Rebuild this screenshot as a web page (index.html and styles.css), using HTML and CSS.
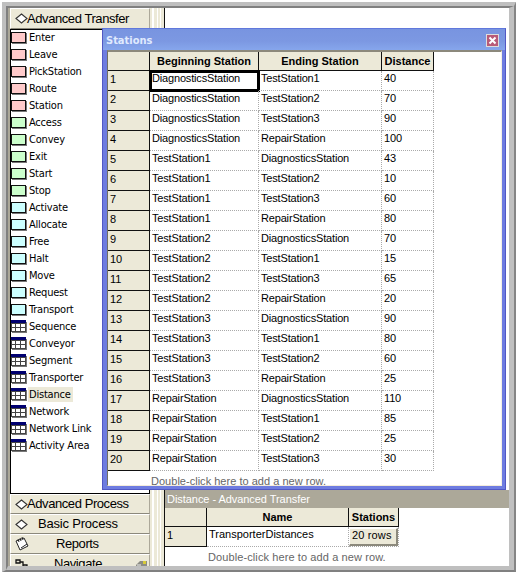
FILE: index.html
```html
<!DOCTYPE html>
<html lang="en">
<head>
<meta charset="utf-8">
<title>Stations</title>
<link rel="stylesheet" href="styles.css">
</head>
<body>
<svg width="0" height="0" class="defs">
  <defs>
    <symbol id="diamond" viewBox="0 0 13 11"><path d="M1 5.5 6.5 1 12 5.5 6.5 10Z" fill="#fff" stroke="#333" stroke-width="1.1"/></symbol>
    <symbol id="sheet" viewBox="0 0 16 13"><path d="M1 2H16V13H1Z" fill="#777"/><path d="M0 0H15V12H0Z" fill="#444"/><path d="M0 0H15V3H0Z" fill="#000070"/><path d="M1 4H4V7H1ZM5 4H9V7H5ZM10 4H14V7H10ZM1 8H4V11H1ZM5 8H9V11H5ZM10 8H14V11H10Z" fill="#fff"/></symbol>
  </defs>
</svg>
<div class="frame">
  <div class="app">
    <aside class="side">
      <div class="bar top"><svg class="dia"><use href="#diamond"/></svg><span>Advanced Transfer</span></div>
      <ul class="list" id="list"></ul>
      <div class="bar"><svg class="dia"><use href="#diamond"/></svg><span>Advanced Process</span></div>
      <div class="bar"><svg class="dia"><use href="#diamond"/></svg><span class="basic">Basic Process</span></div>
      <div class="bar"><svg class="rep" viewBox="0 0 14 14"><path d="M1 4 9 1 13 9 5 13Z" fill="#fff" stroke="#222"/><path d="M3 2 4 5M5 1 6 4M7 0 8 3M6 11 12 7" fill="none" stroke="#222"/></svg><span class="reports">Reports</span></div>
      <div class="bar cut"><svg class="nav" viewBox="0 0 14 10"><path d="M1 1H5V4H1ZM5 3H8V8H13M8 6H12V10" fill="none" stroke="#111" stroke-width="1.3"/></svg><span class="navigate">Navigate</span><svg class="tool" viewBox="0 0 12 8"><path d="M1 5 5 1H12V8H1Z" fill="#8c8c84"/><path d="M2 5H6M3 7H6" stroke="#eee"/><path d="M8 1H11V4H8Z" fill="#d8cc38"/></svg></div>
    </aside>
    <div class="splitter"></div>
    <main class="main">
      <div class="canvas"></div>
      <div class="caption">Distance - Advanced Transfer</div>
      <div class="sheet lower">
        <div class="h"></div><div class="h">Name</div><div class="h">Stations</div>
        <div class="n">1</div><div class="c">TransporterDistances</div><div class="c rows"><button>20 rows</button></div>
      </div>
      <div class="hint">Double-click here to add a new row.</div>
    </main>
  </div>
</div>
<section class="window">
  <header class="title"><span>Stations</span><button class="close"><svg viewBox="0 0 9 9"><path d="M1.5 1.5 7.5 7.5M7.5 1.5 1.5 7.5" stroke="#fff" stroke-width="2"/></svg></button></header>
  <div class="inner">
    <div class="sheet upper" id="grid"><div class="h"></div><div class="h">Beginning Station</div><div class="h">Ending Station</div><div class="h">Distance</div></div>
    <div class="hint">Double-click here to add a new row.</div>
  </div>
</section>
<script src="app.js"></script>
</body>
</html>
```
FILE: styles.css
```css
* { box-sizing: border-box; }
body { margin: 0; width: 516px; height: 572px; overflow: hidden; background: #fff; position: relative; font: 11px "Liberation Sans", Arial, sans-serif; color: #000; }
button { font: inherit; padding: 0; margin: 0; }
.defs { position: absolute; }
.frame { margin: 2px 0 0 2px; width: 514px; height: 570px; border: solid; border-width: 4px 2px 2px 4px; border-color: #bfbfbf #858585 #808080 #bfbfbf; }
.app { width: 508px; height: 564px; border: solid; border-width: 2px 5px 4px 2px; border-color: #808080 #c0c0c0 #bfbfbf #808080; display: grid; grid-template-columns: 142px 14px 1fr; overflow: hidden; }
.side { display: flex; flex-direction: column; background: #ece9d8; border-left: 2px solid #aca899; height: 558px; overflow: hidden; }
.bar { flex: 0 0 20px; height: 20px; display: flex; align-items: center; padding-left: 4px; background: #ece9d8; border: 1px solid; border-color: #fff #aca899 #8c897c #fff; font: 13px/18px "Liberation Sans", Arial, sans-serif; white-space: nowrap; }
.bar.top { flex-basis: 21px; height: 21px; }
.dia { width: 13px; height: 11px; flex: none; }
.bar span { margin-left: -1px; letter-spacing: -.42px; }
.bar span.basic { margin-left: 10px; letter-spacing: -.2px; }
.bar span.reports { margin-left: 27px; }
.bar span.navigate { margin-left: 25px; }
.rep, .nav { width: 14px; height: 14px; flex: none; }
.nav { height: 10px; }
.tool { width: 12px; height: 8px; margin-left: auto; margin-right: 2px; }
.list { flex: 0 0 465px; list-style: none; margin: 0; padding: 0; background: #fff; border: 1px solid #000; font: 11px/15px "DejaVu Sans Condensed", "DejaVu Sans", sans-serif; letter-spacing: -.2px; }
.list li { height: 17px; display: flex; align-items: flex-start; }
.list span { padding: 0 2px 0 1px; }
.list .on span { background: #ece9d8; }
.swatch { width: 15px; height: 11px; border: 1px solid #111; box-shadow: 1px 1px #777; margin: 2px 2px 0 0; }
.pink { background: #ffcaca; }
.green { background: #ccffcc; }
.cyan { background: #ccffff; }
.mini { width: 16px; height: 13px; margin: 1px 1px 0 0; }
.splitter { background: linear-gradient(90deg, #ece9d8 0 2px, #fff 2px 4px, #ece9d8 4px 7px, #fff 7px 8px, #ece9d8 8px 10px, #fff 10px 11px, #ece9d8 11px); }
.main { border-left: 1px solid #111; background: #fff; display: flex; flex-direction: column; }
.canvas { flex: 0 0 482px; }
.caption { height: 18px; background: #aca899; color: #fff; font-size: 11px; line-height: 18px; padding-left: 2px; letter-spacing: -.05px; }
.sheet { display: grid; grid-auto-rows: 20px; }
.lower { grid-template-columns: 42px 142px 50px; grid-template-rows: 19px 20px; width: 234px; }
.upper { grid-template-columns: 42px 109px 123px 52px; grid-template-rows: 19px; width: 326px; }
.upper .c { letter-spacing: -.17px; }
.h { background: #ece9d8; border-right: 1px solid #111; border-bottom: 1px solid #111; text-align: center; font-weight: bold; line-height: 19px; white-space: nowrap; }
.n { background: #ece9d8; border-right: 1px solid #111; border-bottom: 1px solid #111; padding-left: 2px; line-height: 16px; }
.c { border-right: 1px dotted #aaa; border-bottom: 1px dotted #aaa; padding-left: 2px; line-height: 15px; white-space: nowrap; }
.c.sel { outline: 3px solid #000; outline-offset: -2px; }
.hint { color: #666; white-space: nowrap; }
.main .hint { padding: 4px 0 0 43px; letter-spacing: .1px; }
.rows { padding: 1px 0 0; }
.rows button { display: block; width: 49px; height: 18px; background: #ece9d8; border: solid; border-width: 1px 2px 2px 1px; border-color: #fff #8c897c #8c897c #fff; text-align: left; padding: 0 0 2px 2px; line-height: 13px; letter-spacing: .15px; }
.window { position: absolute; left: 102px; top: 28px; width: 404px; height: 462px; border: solid #6e7ce0; border-width: 0 4px 4px 5px; background: #fff; }
.window::after { content: ""; position: absolute; inset: 0 -4px -4px -5px; border: 1px solid #5258c4; border-top-color: #6078dc; pointer-events: none; }
.title { margin: 0 -4px 0 -5px; height: 22px; background: linear-gradient(#7894e0, #7c98e2 60%, #86a6ec); display: flex; justify-content: space-between; align-items: center; padding: 3px 7px 0 4px; color: #e0eafe; font: bold 11px "DejaVu Sans Condensed", "DejaVu Sans", sans-serif; }
.close { width: 13px; height: 13px; background: #b85a78; border: 1px solid #ddd; display: grid; place-items: center; }
.close svg { width: 9px; height: 9px; }
.inner { height: 436px; overflow: hidden; border-top: 2px solid #8c897c; border-left: 1px solid #716f64; border-right: 1px solid #f4f0e4; border-bottom: 1px solid #f4ecdc; }
.inner .hint { padding: 4px 0 0 43px; letter-spacing: .02px; }
```
FILE: app.js
```js
const groups = [
  ["pink", ["Enter", "Leave", "PickStation", "Route", "Station"]],
  ["green", ["Access", "Convey", "Exit", "Start", "Stop"]],
  ["cyan", ["Activate", "Allocate", "Free", "Halt", "Move", "Request", "Transport"]],
  ["sheet", ["Sequence", "Conveyor", "Segment", "Transporter", "Distance", "Network", "Network Link", "Activity Area"]]
];
document.getElementById("list").innerHTML = groups.map(([kind, names]) => names.map(name =>
  `<li class="${name === "Distance" ? "on" : ""}">${kind === "sheet" ? '<svg class="mini"><use href="#sheet"/></svg>' : `<i class="swatch ${kind}"></i>`}<span>${name}</span></li>`
).join("")).join("");

const D = "DiagnosticsStation", R = "RepairStation", T = n => "TestStation" + n;
const stations = [D, T(1), T(2), T(3), R];
const distances = [40, 70, 90, 100, 43, 10, 60, 80, 70, 15, 65, 20, 90, 80, 60, 25, 110, 85, 25, 30];
let i = 0, html = "";
for (const from of stations) {
  for (const to of stations) {
    if (from === to) continue;
    html += `<div class="n">${i + 1}</div><div class="c${i ? "" : " sel"}">${from}</div><div class="c">${to}</div><div class="c">${distances[i]}</div>`;
    i++;
  }
}
document.getElementById("grid").insertAdjacentHTML("beforeend", html);
```
